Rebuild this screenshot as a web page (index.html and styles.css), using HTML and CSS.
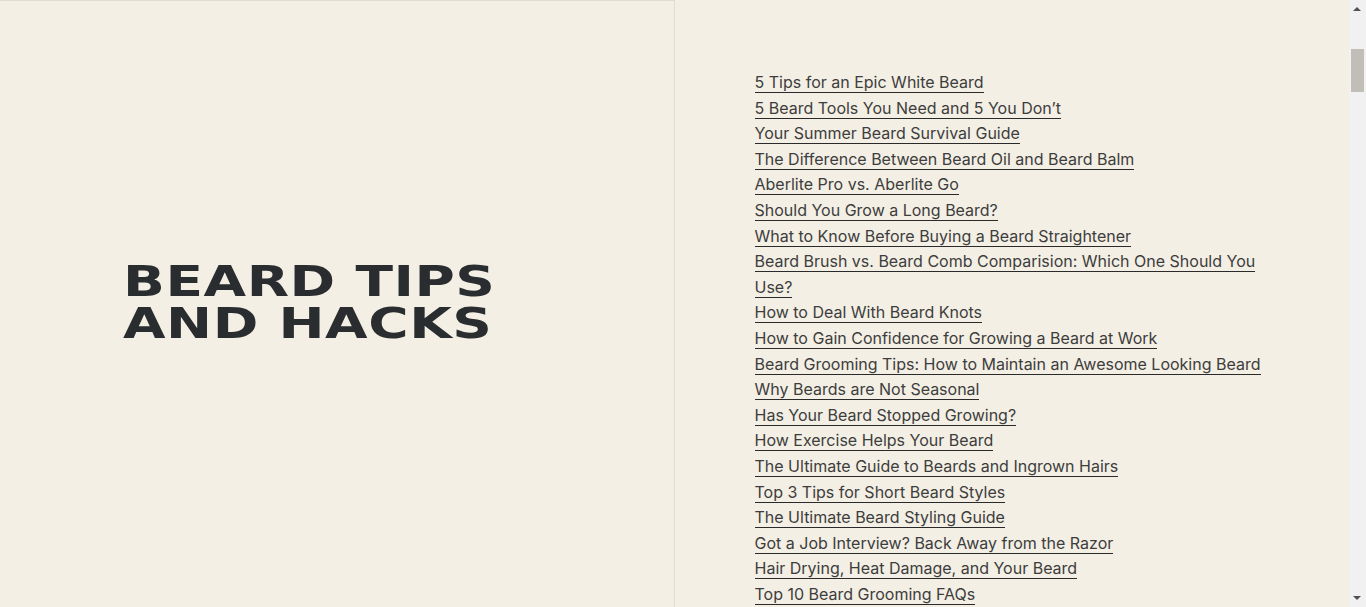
FILE: index.html
```html
<!DOCTYPE html>
<html lang="en">
<head>
<meta charset="utf-8">
<title>Beard Tips and Hacks</title>
<link rel="stylesheet" href="styles.css">
</head>
<body>
<main class="page">
  <section class="intro">
    <h1 class="title">BEARD TIPS<br>AND HACKS</h1>
  </section>
  <section class="articles">
    <ul class="article-list">
      <li><a href="#">5 Tips for an Epic White Beard</a></li>
      <li><a href="#">5 Beard Tools You Need and 5 You Don’t</a></li>
      <li><a href="#">Your Summer Beard Survival Guide</a></li>
      <li><a href="#">The Difference Between Beard Oil and Beard Balm</a></li>
      <li><a href="#">Aberlite Pro vs. Aberlite Go</a></li>
      <li><a href="#">Should You Grow a Long Beard?</a></li>
      <li><a href="#">What to Know Before Buying a Beard Straightener</a></li>
      <li><a href="#">Beard Brush vs. Beard Comb Comparision: Which One Should You Use?</a></li>
      <li><a href="#">How to Deal With Beard Knots</a></li>
      <li><a href="#">How to Gain Confidence for Growing a Beard at Work</a></li>
      <li><a href="#">Beard Grooming Tips: How to Maintain an Awesome Looking Beard</a></li>
      <li><a href="#">Why Beards are Not Seasonal</a></li>
      <li><a href="#">Has Your Beard Stopped Growing?</a></li>
      <li><a href="#">How Exercise Helps Your Beard</a></li>
      <li><a href="#">The Ultimate Guide to Beards and Ingrown Hairs</a></li>
      <li><a href="#">Top 3 Tips for Short Beard Styles</a></li>
      <li><a href="#">The Ultimate Beard Styling Guide</a></li>
      <li><a href="#">Got a Job Interview? Back Away from the Razor</a></li>
      <li><a href="#">Hair Drying, Heat Damage, and Your Beard</a></li>
      <li><a href="#">Top 10 Beard Grooming FAQs</a></li>
      <li><a href="#">How to Soften a Coarse Beard</a></li>
      <li><a href="#">Beard Care for Sensitive Skin</a></li>
      <li><a href="#">How to Fix a Patchy Beard</a></li>
      <li><a href="#">The Best Beard Styles for Your Face Shape</a></li>
    </ul>
  </section>
</main>
<div class="scrollbar" aria-hidden="true">
  <span class="scroll-arrow scroll-up"></span>
  <span class="scroll-thumb"></span>
  <span class="scroll-arrow scroll-down"></span>
</div>
</body>
</html>
```
FILE: styles.css
```css
html, body {
  margin: 0;
  padding: 0;
}
body {
  background: #f3efe4;
  color: #3b3b3b;
  font-family: Inter, "DejaVu Sans", sans-serif;
}
.page {
  display: grid;
  grid-template-columns: 1fr 1fr;
  width: calc(100% - 17px);
  min-height: 2400px;
}
.intro {
  position: sticky;
  top: 0;
  height: 100vh;
  box-sizing: border-box;
  border-top: 1px solid #e1ddd1;
  border-right: 1px solid #e1ddd1;
  display: flex;
  align-items: center;
  padding-left: 123px;
}
.title {
  margin: 0;
  padding-bottom: 2px;
  font-family: "DejaVu Sans", sans-serif;
  font-weight: 700;
  font-size: 42px;
  line-height: 42px;
  color: #2a2d2f;
  transform: scaleX(1.31);
  transform-origin: left center;
  white-space: nowrap;
  letter-spacing: 0.4px;
}
.articles {
  padding: 70px 80px 80px 80px;
}
.article-list {
  list-style: none;
  margin: 0;
  padding: 0;
}
.article-list li {
  font-size: 16px;
  line-height: 25.6px;
}
.article-list a {
  color: #3d3d3d;
  text-decoration: none;
  border-bottom: 1px solid #2a2a2a;
}

/* decorative browser scrollbar */
.scrollbar {
  position: fixed;
  top: 0;
  right: 0;
  width: 17px;
  height: 100vh;
  background: #f1f1f1;
}
.scroll-thumb {
  position: absolute;
  left: 2px;
  right: 2px;
  top: 49px;
  height: 43px;
  background: #c1beb8;
}
.scroll-arrow {
  position: absolute;
  left: 4px;
  width: 0;
  height: 0;
  border-left: 4px solid transparent;
  border-right: 4px solid transparent;
}
.scroll-up {
  top: 7px;
  border-bottom: 4px solid #505050;
}
.scroll-down {
  bottom: 7px;
  border-top: 4px solid #505050;
}
```
